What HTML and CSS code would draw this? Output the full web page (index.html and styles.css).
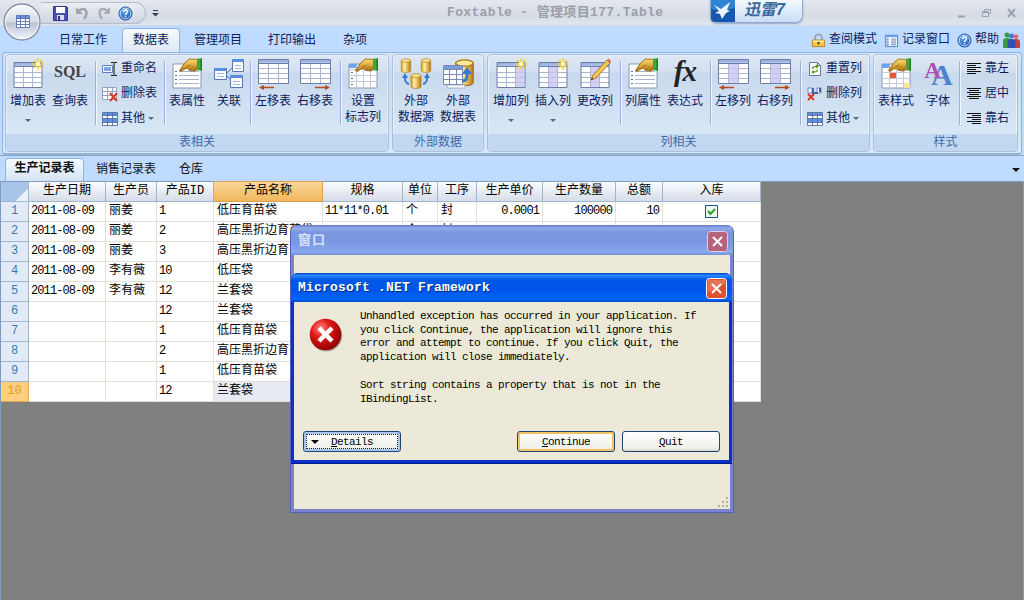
FILE: index.html
```html
<!DOCTYPE html>
<html lang="zh-CN">
<head>
    <meta charset="UTF-8">
    <title>Foxtable - 管理项目177.Table</title>
    <link rel="stylesheet" href="styles.css">
</head>
<body>
<!-- Icons -->
<svg class="defs" width="0" height="0">
    <defs>
        <linearGradient id="gold" x1="0" x2="1"><stop offset="0" stop-color="#e0a020"/><stop offset=".35" stop-color="#fff0a0"/><stop offset="1" stop-color="#b87808"/></linearGradient>
        <linearGradient id="skin" x1="0" x2="0" y1="0" y2="1"><stop offset="0" stop-color="#ffe068"/><stop offset="1" stop-color="#b47410"/></linearGradient>
        <linearGradient id="head" x1="0" x2="0" y1="0" y2="1"><stop offset="0" stop-color="#8fa8dc"/><stop offset="1" stop-color="#b8c8ee"/></linearGradient>
        <radialGradient id="red" cx=".35" cy=".3" r=".75"><stop offset="0" stop-color="#ff8a80"/><stop offset=".4" stop-color="#e01818"/><stop offset="1" stop-color="#8c0000"/></radialGradient>
        <radialGradient id="blue" cx=".4" cy=".3" r=".7"><stop offset="0" stop-color="#6fb0f5"/><stop offset="1" stop-color="#1450b8"/></radialGradient>
        <linearGradient id="orb" x1="0" x2="0" y1="0" y2="1"><stop offset="0" stop-color="#fafbfc"/><stop offset=".5" stop-color="#d5dbe4"/><stop offset=".52" stop-color="#b9c2d0"/><stop offset="1" stop-color="#f4f8fd"/></linearGradient>
    </defs>
    <symbol id="i-star" viewBox="0 0 12 12">
        <path d="M6 0v12M0 6h12M2 2l8 8M10 2l-8 8" stroke="#f0cf3c" stroke-width="1.5"/>
        <circle cx="6" cy="6" r="2.2" fill="#fffbc0"/>
    </symbol>
    <symbol id="i-table" viewBox="0 0 32 32">
        <path d="M2 4.500h28v25H2z" fill="#fff"/>
        <path d="M2 4.500h28v4H2z" fill="url(#head)"/>
        <path d="M2 14.500h28M2 19.500h28M2 24.500h28M11.500 9v20M20.500 9v20" stroke="#a9b6cf"/>
        <path d="M2 4.500h28v25H2zM2 8.500h28" fill="none" stroke="#6c7fa6"/>
    </symbol>
    <symbol id="i-addtable" viewBox="0 0 32 32">
        <use href="#i-table" x="0" y="0" width="32" height="32"/>
        <use href="#i-star" x="20" y="0" width="12" height="12"/>
    </symbol>
    <symbol id="i-moveleft" viewBox="0 0 32 32">
        <path d="M1 1.500h30v24H1z" fill="#fff"/>
        <path d="M1 1.500h30v4H1z" fill="url(#head)"/>
        <path d="M1 10.500h30M1 15.500h30M1 20.500h30M11.500 5v20M21.500 5v20" stroke="#a9b6cf"/>
        <path d="M1.500 1.500h30v24h-30zM1 5.500h30" fill="none" stroke="#6c7fa6"/>
        <path d="M4 29.500h13" stroke="#b84a1c" stroke-width="1.400"/>
        <path d="M2 29.500l5-2.500v5z" fill="#b84a1c"/>
    </symbol>
    <symbol id="i-moveright" viewBox="0 0 32 32">
        <path d="M1 1.500h30v24H1z" fill="#fff"/>
        <path d="M1 1.500h30v4H1z" fill="url(#head)"/>
        <path d="M1 10.500h30M1 15.500h30M1 20.500h30M11.500 5v20M21.500 5v20" stroke="#a9b6cf"/>
        <path d="M1.500 1.500h30v24h-30zM1 5.500h30" fill="none" stroke="#6c7fa6"/>
        <path d="M16 29.500h13" stroke="#b84a1c" stroke-width="1.400"/>
        <path d="M31 29.500l-5-2.500v5z" fill="#b84a1c"/>
    </symbol>
    <symbol id="i-hand" viewBox="0 0 24 14">
        <path d="M1 12.500L6 5l5-4 8 .5v10l-3 1.500-5-.5-2-2-3 .5-3 2.500z" fill="url(#skin)" stroke="#8a5c10" stroke-width=".8"/>
        <path d="M8 9l4-2M11 12l4-4M15 12.500l3-4" stroke="#8a5c10" stroke-width=".8"/>
        <path d="M19 .5h4.500v12H19z" fill="#3fa83c"/>
        <path d="M22 .5h1.500v12H22z" fill="#1f7a28"/>
    </symbol>
    <symbol id="i-props" viewBox="0 0 32 32">
        <path d="M2 6h28v24H2z" fill="#fff" stroke="#8b97b4"/>
        <path d="M8 13.500h20M8 17.500h20M8 21.500h20M8 25.500h20" stroke="#aab4cc"/>
        <path d="M4 13.500h2M4 17.500h2M4 21.500h2M4 25.500h2" stroke="#5570b0"/>
        <use href="#i-hand" x="7" y="0" width="25" height="14"/>
    </symbol>
    <symbol id="i-flag" viewBox="0 0 32 32">
        <path d="M2 6h28v24H2z" fill="#fff" stroke="#8b97b4"/>
        <path d="M2 6h8v4H2z" fill="#6ea3ee"/>
        <path d="M2 11.500h28M2 17.500h28M2 23.500h28M9.500 8v22M16.500 11v19M23.500 11v19" stroke="#c3cad9"/>
        <path d="M4 14.500h2M4 20.500h2M4 26.500h2" stroke="#5570b0"/>
        <use href="#i-hand" x="7" y="0" width="25" height="14"/>
    </symbol>
    <symbol id="i-style" viewBox="0 0 32 32">
        <path d="M2 6h28v24H2z" fill="#fff" stroke="#8b97b4"/>
        <path d="M2 6h8v4H2z" fill="#6ea3ee"/>
        <path d="M2 14.500h28M2 20.500h28M2 25.500h28M9.500 8v22M16.500 11v19M23.500 11v19" stroke="#c3cad9"/>
        <path d="M10 15h6v5h-6z" fill="#e8582c"/>
        <path d="M24 25h6v5h-6z" fill="#f8e4a0"/>
        <use href="#i-hand" x="7" y="0" width="25" height="14"/>
    </symbol>
    <symbol id="i-relation" viewBox="0 0 32 32">
        <path d="M13 16l8-8M13 17l6 6" stroke="#5c6f98"/>
        <g stroke="#5577b5" fill="#fff">
            <path d="M1.500 10.500h12v11h-12zM19.500 1.500h11v12h-11zM17.500 17.500h12v12h-12z"/>
        </g>
        <path d="M1 10h13v3H1zM19 1h12v3H19zM17 17h13v3H17z" fill="#5b8ede"/>
        <path d="M4 15.500h7M4 18.500h7M22 7.500h6M22 10.500h6M20 23.500h7M20 26.500h7" stroke="#a4b6dc"/>
    </symbol>
    <symbol id="i-db" viewBox="0 0 12 16">
        <path d="M1 2.500v11c0 2.500 10 2.500 10 0v-11z" fill="url(#gold)" stroke="#a87818" stroke-width=".7"/>
        <ellipse cx="6" cy="2.600" rx="5" ry="1.800" fill="#ffe898" stroke="#a87818" stroke-width=".7"/>
    </symbol>
    <symbol id="i-source" viewBox="0 0 32 32">
        <use href="#i-db" x="0" y="0" width="12" height="15"/>
        <use href="#i-db" x="20" y="0" width="12" height="15"/>
        <use href="#i-db" x="10" y="15" width="12" height="16"/>
        <path d="M9 26c-4-1-4-4-4-7M23 26c4-1 4-4 4-7" fill="none" stroke="#3a78cc" stroke-width="2"/>
        <path d="M5 15l-3 5h6zM27 15l-3 5h6z" fill="#3a78cc"/>
    </symbol>
    <symbol id="i-exttable" viewBox="0 0 32 32">
        <use href="#i-db" x="12" y="0" width="21" height="29"/>
        <path d="M5 27h18v3H5z" fill="#fff" stroke="#8b97b4" stroke-width=".7"/>
        <path d="M1.500 7.500h19v19h-19z" fill="#fff"/>
        <path d="M1.500 7.500h19v4h-19z" fill="#7b9be0"/>
        <path d="M1.500 7.500h19v19h-19zM1 11.500h19M1 16.500h19M1 21.500h19M7.500 11v15M14.500 11v15" fill="none" stroke="#7b8cb0"/>
        <path d="M20 23c6 0 5-5 5-8" fill="none" stroke="#3a78cc" stroke-width="3"/>
        <path d="M25 9l-5 7h10z" fill="#3a78cc"/>
    </symbol>
    <symbol id="i-addcol" viewBox="0 0 32 32">
        <use href="#i-table" x="0" y="0" width="32" height="32"/>
        <path d="M21 9h8.500v20H21z" fill="#c9c4f2" opacity=".8"/>
        <use href="#i-star" x="20" y="0" width="12" height="12"/>
    </symbol>
    <symbol id="i-inscol" viewBox="0 0 32 32">
        <use href="#i-table" x="0" y="0" width="32" height="32"/>
        <path d="M12 9h8v20h-8z" fill="#c9c4f2" opacity=".8"/>
        <use href="#i-star" x="20" y="0" width="12" height="12"/>
    </symbol>
    <symbol id="i-editcol" viewBox="0 0 32 32">
        <use href="#i-table" x="0" y="0" width="32" height="32"/>
        <path d="M12 9h8v20h-8z" fill="#c9c4f2" opacity=".8"/>
        <path d="M12 22l2-5L28 2l3 3-14 15z" fill="#f4c650" stroke="#8a6a28" stroke-width=".8"/>
        <path d="M28 2l1.500-1.500 3 3L31 5z" fill="#d87070"/>
        <path d="M12 22l1-2.500 1.500 1.500z" fill="#333"/>
    </symbol>
    <symbol id="i-colleft" viewBox="0 0 32 32">
        <use href="#i-moveleft" width="32" height="32"/>
        <path d="M12 6h9v19h-9z" fill="#c9c4f2" opacity=".8"/>
    </symbol>
    <symbol id="i-colright" viewBox="0 0 32 32">
        <use href="#i-moveright" width="32" height="32"/>
        <path d="M12 6h9v19h-9z" fill="#c9c4f2" opacity=".8"/>
    </symbol>
    <symbol id="i-rename" viewBox="0 0 16 16">
        <path d="M.5 4.500h10v7H.5z" fill="#fff" stroke="#5f7fb8"/>
        <path d="M2 6h7v4H2z" fill="#7da4e4"/>
        <path d="M9 1.500h2.500l.5.500.5-.5H15M9 14.500h2.500l.5-.5.5.5H15M12 2v12" fill="none" stroke="#111"/>
    </symbol>
    <symbol id="i-deltable" viewBox="0 0 16 16">
        <path d="M.5 1.500h14v12H.5z" fill="#fff"/>
        <path d="M.5 1.500h14v12H.5zM.5 5.500h14M.5 9.500h14M5.500 1.500v12M10.500 1.500v12" fill="none" stroke="#95a2be"/>
        <path d="M8 7l7 8M15 7l-7 8" stroke="#dc3a28" stroke-width="2"/>
    </symbol>
    <symbol id="i-other" viewBox="0 0 16 16">
        <path d="M.5 1.500h15v13H.5z" fill="#fff"/>
        <path d="M.5 1.500h15v3H.5zM.5 7.500h15v4H.5z" fill="#5f8fe0"/>
        <path d="M.5 1.500h15v13H.5zM.5 4.500h15M.5 7.500h15M.5 11.500h15M5.500 1.500v13M10.500 1.500v13" fill="none" stroke="#56719f" stroke-width=".9"/>
    </symbol>
    <symbol id="i-reset" viewBox="0 0 16 16">
        <path d="M2.500 1.500h8l3 3v10h-11z" fill="#fff" stroke="#68789c"/>
        <path d="M10.500 1.500v3h3" fill="none" stroke="#68789c"/>
        <path d="M5.500 8c0-2 2-3 4.500-2M10.500 8.500c0 2-2 3-4.500 2" fill="none" stroke="#5f9a20" stroke-width="1.300"/>
        <path d="M9 3.500l3 2-3 2zM7 9l-3 2 3 2z" fill="#5f9a20"/>
    </symbol>
    <symbol id="i-delcol" viewBox="0 0 16 16">
        <path d="M1 2h4v5H1zM10 2h4v5h-4z" fill="#fff" stroke="#6d88bc"/>
        <path d="M5 2h2v8H5zM12 2h2v4h-2zM7 6h4v2H7z" fill="#3f65ae"/>
        <path d="M1 8l6 6M7 8l-6 6" stroke="#dc3a28" stroke-width="2"/>
    </symbol>
    <symbol id="i-left" viewBox="0 0 16 16"><path d="M1 2.500h14M1 4.500h9M1 6.500h14M1 8.500h9M1 10.500h14M1 12.500h9" stroke="#111"/></symbol>
    <symbol id="i-center" viewBox="0 0 16 16"><path d="M1 2.500h14M3 4.500h10M1 6.500h14M3 8.500h10M1 10.500h14M3 12.500h10" stroke="#111"/></symbol>
    <symbol id="i-right" viewBox="0 0 16 16"><path d="M1 2.500h14M6 4.500h9M1 6.500h14M6 8.500h9M1 10.500h14M6 12.500h9" stroke="#111"/></symbol>
    <symbol id="i-help" viewBox="0 0 16 16">
        <circle cx="8" cy="8" r="7" fill="url(#blue)" stroke="#2a5cb0"/>
        <circle cx="8" cy="8" r="5.700" fill="none" stroke="#e8f2ff" stroke-width=".9"/>
        <path d="M6 6.500c0-3 4.200-2.700 4.200-.3 0 1.500-2.100 1.500-2.100 3.300" fill="none" stroke="#fff" stroke-width="1.500"/>
        <path d="M7.300 10.500h1.600v1.500H7.300z" fill="#fff"/>
    </symbol>
    <symbol id="i-lock" viewBox="0 0 16 16">
        <path d="M4.500 8V4.500c0-4 7-4 7 0V8" fill="none" stroke="#98a0ac" stroke-width="1.700"/>
        <path d="M1.500 7.500h13v7h-13z" fill="#f6c64c" stroke="#b88420"/>
        <path d="M2 8h12v2H2z" fill="#fde79c"/>
        <path d="M8 9.500v3M6.500 10.500h3" stroke="#6a4808" stroke-width="1.200"/>
    </symbol>
    <symbol id="i-record" viewBox="0 0 16 16">
        <path d="M1.500 2.500h13v12h-13z" fill="#fff" stroke="#4c78be"/>
        <path d="M1 2h14v2.500H1z" fill="#6c9ce6"/>
        <path d="M2 5h3.500v9H2z" fill="#b9d0f4"/>
        <path d="M7.500 6.500H13M7.500 8.500H13M7.500 10.500H13M7.500 12.500H13M3 6.500h1.500M3 9.500h1.500M3 12.500h1.500" stroke="#5b7cb8"/>
    </symbol>
</svg>

<header class="titlebar">
    <div class="quick">
        <svg width="15" height="15" viewBox="0 0 15 15"><path d="M.5.500h13l1 1v13H.5z" fill="#4a50b4" stroke="#303684"/><path d="M3 1h9v6H3z" fill="#fff"/><path d="M4 9h7v5H4z" fill="#d8dcf0"/><path d="M5 10h2v4H5z" fill="#30346c"/></svg>
        <svg width="13" height="14" viewBox="0 0 13 14"><path d="M2 5c8-5 11 1 6 8" fill="none" stroke="#a0a5b0" stroke-width="2.500"/><path d="M0 1v7h7z" fill="#a0a5b0"/></svg>
        <svg width="13" height="14" viewBox="0 0 13 14"><path d="M11 5C3 0 0 6 5 13" fill="none" stroke="#a8adb8" stroke-width="2.500"/><path d="M13 1v7H6z" fill="#a8adb8"/></svg>
        <svg width="15" height="15"><use href="#i-help"/></svg>
    </div>
    <svg class="more" width="7" height="8" viewBox="0 0 7 8"><path d="M1 1.500h5" stroke="#33415f"/><path d="M0 4h7L3.500 7.500z" fill="#33415f"/></svg>
    <div class="title">Foxtable - 管理项目177.Table</div>
    <div class="badge">
        <svg width="24" height="22" viewBox="0 0 24 22"><path d="M0 0h24v22H4q-4 0-4-4z" fill="#1758ae"/><path d="M0 0h24v8Q10 12 0 9z" fill="#2f82d4"/><path d="M3 5l7 4 9-7-3 8 3 1-4 2-4 6-2-5-5-1 4-2z" fill="#eef7ff"/></svg>
        <span>迅雷7</span>
    </div>
    <div class="sysbtns">
        <svg width="9" height="10" viewBox="0 0 9 10"><path d="M1 8.500h7" stroke="#9ba3b0" stroke-width="2"/></svg>
        <svg width="9" height="10" viewBox="0 0 9 10"><path d="M2.500 3V1.500h6v4H7M.5 4.500h6v4h-6zM.5 3.500h6" fill="none" stroke="#9ba3b0"/></svg>
        <svg width="9" height="10" viewBox="0 0 9 10"><path d="M1 1l7 8M8 1L1 9" stroke="#9ba3b0" stroke-width="2"/></svg>
    </div>
</header>

<svg class="orb" width="40" height="40" viewBox="0 0 40 40">
    <circle cx="20" cy="20" r="18" fill="url(#orb)" stroke="#8792a4" stroke-width="1.300"/>
    <circle cx="20" cy="20" r="16.500" fill="none" stroke="#fff" opacity=".7"/>
    <path d="M14.500 13.500h13v12h-13z" fill="#fff"/><path d="M14.500 13.500h13v3h-13z" fill="#6b8fdc"/>
    <path d="M14.500 13.500h13v12h-13zM14.500 16.500h13M14.500 19.500h13M14.500 22.500h13M18.500 13.500v12M23.500 13.500v12" fill="none" stroke="#5673b4" stroke-width=".9"/>
</svg>

<nav class="menu">
    <div class="tabs">
        <span>日常工作</span>
        <span class="active">数据表</span>
        <span>管理项目</span>
        <span>打印输出</span>
        <span class="short">杂项</span>
    </div>
    <div class="tools">
        <span><svg width="15" height="15"><use href="#i-lock"/></svg>查阅模式</span>
        <span><svg width="15" height="15"><use href="#i-record"/></svg>记录窗口</span>
        <span><svg width="15" height="15"><use href="#i-help"/></svg>帮助</span>
        <svg width="17" height="16" viewBox="0 0 17 16"><circle cx="4" cy="3" r="2.500" fill="#3b9a3b"/><path d="M0 16V9q0-3 4-3t4 3v7z" fill="#3b9a3b"/><circle cx="13" cy="4.500" r="2.300" fill="#e06a6a"/><path d="M9 16v-6q0-3 4-3t4 3v6z" fill="#c8403c"/><circle cx="8.500" cy="4" r="2.500" fill="#4a78d8"/><path d="M4.500 16v-6q0-3 4-3t4 3v6z" fill="#2c54b8"/></svg>
    </div>
</nav>

<section class="ribbon">
    <div class="group g-table">
        <div class="items">
            <div class="big"><svg><use href="#i-addtable"/></svg>增加表<i class="caret"></i></div>
            <div class="big"><b class="sql">SQL</b>查询表</div>
            <div class="sep wide"></div>
            <div class="col">
                <span><svg><use href="#i-rename"/></svg>重命名</span>
                <span><svg><use href="#i-deltable"/></svg>删除表</span>
                <span><svg><use href="#i-other"/></svg>其他<i class="caret"></i></span>
            </div>
            <div class="sep"></div>
            <div class="big"><svg><use href="#i-props"/></svg>表属性</div>
            <div class="big"><svg><use href="#i-relation"/></svg>关联</div>
            <div class="sep"></div>
            <div class="big"><svg><use href="#i-moveleft"/></svg>左移表</div>
            <div class="big"><svg><use href="#i-moveright"/></svg>右移表</div>
            <div class="sep wide"></div>
            <div class="big"><svg><use href="#i-flag"/></svg>设置<br>标志列</div>
        </div>
        <div class="caption">表相关</div>
    </div>
    <div class="group g-ext">
        <div class="items">
            <div class="big"><svg><use href="#i-source"/></svg>外部<br>数据源</div>
            <div class="big"><svg><use href="#i-exttable"/></svg>外部<br>数据表</div>
        </div>
        <div class="caption">外部数据</div>
    </div>
    <div class="group g-col">
        <div class="items">
            <div class="big"><svg><use href="#i-addcol"/></svg>增加列<i class="caret"></i></div>
            <div class="big"><svg><use href="#i-inscol"/></svg>插入列<i class="caret"></i></div>
            <div class="big"><svg><use href="#i-editcol"/></svg>更改列</div>
            <div class="sep wide"></div>
            <div class="big"><svg><use href="#i-props"/></svg>列属性</div>
            <div class="big"><b class="fx">fx</b>表达式</div>
            <div class="sep wide"></div>
            <div class="big"><svg><use href="#i-colleft"/></svg>左移列</div>
            <div class="big"><svg><use href="#i-colright"/></svg>右移列</div>
            <div class="sep wide"></div>
            <div class="col">
                <span><svg><use href="#i-reset"/></svg>重置列</span>
                <span><svg><use href="#i-delcol"/></svg>删除列</span>
                <span><svg><use href="#i-other"/></svg>其他<i class="caret"></i></span>
            </div>
        </div>
        <div class="caption">列相关</div>
    </div>
    <div class="group g-style">
        <div class="items">
            <div class="big"><svg><use href="#i-style"/></svg>表样式</div>
            <div class="big"><b class="font"><em>A</em>A</b>字体</div>
            <div class="sep"></div>
            <div class="col">
                <span><svg><use href="#i-left"/></svg>靠左</span>
                <span><svg><use href="#i-center"/></svg>居中</span>
                <span><svg><use href="#i-right"/></svg>靠右</span>
            </div>
        </div>
        <div class="caption">样式</div>
    </div>
</section>

<div class="sheets">
    <span class="active">生产记录表</span>
    <span>销售记录表</span>
    <span>仓库</span>
    <i class="caret"></i>
</div>

<main>
    <table>
        <colgroup>
            <col class="w28"><col class="w77"><col class="w51"><col class="w57"><col class="w109"><col class="w80"><col class="w35"><col class="w39"><col class="w66"><col class="w73"><col class="w47"><col class="w98">
        </colgroup>
        <thead>
            <tr><th class="corner"></th><th>生产日期</th><th>生产员</th><th>产品ID</th><th class="current">产品名称</th><th>规格</th><th>单位</th><th>工序</th><th>生产单价</th><th>生产数量</th><th>总额</th><th>入库</th></tr>
        </thead>
        <tbody>
            <tr><th>1</th><td class="code">2011-08-09</td><td>丽姜</td><td class="code">1</td><td>低压育苗袋</td><td class="code">11*11*0.01</td><td>个</td><td>封</td><td class="code num">0.0001</td><td class="code num">100000</td><td class="code num">10</td><td class="check"><svg width="13" height="13" viewBox="0 0 13 13"><path d="M.5.500h12v12H.5z" fill="#f1f7f1" stroke="#1c5180"/><path d="M3 6l2.500 3L10 4" fill="none" stroke="#2fa02f" stroke-width="2"/></svg></td></tr>
            <tr><th>2</th><td class="code">2011-08-09</td><td>丽姜</td><td class="code">2</td><td>高压黑折边育苗袋</td><td></td><td>个</td><td>封</td><td></td><td></td><td></td><td></td></tr>
            <tr><th>3</th><td class="code">2011-08-09</td><td>丽姜</td><td class="code">3</td><td>高压黑折边育</td><td></td><td></td><td></td><td></td><td></td><td></td><td></td></tr>
            <tr><th>4</th><td class="code">2011-08-09</td><td>李有薇</td><td class="code">10</td><td>低压袋</td><td></td><td></td><td></td><td></td><td></td><td></td><td></td></tr>
            <tr><th>5</th><td class="code">2011-08-09</td><td>李有薇</td><td class="code">12</td><td>兰套袋</td><td></td><td></td><td></td><td></td><td></td><td></td><td></td></tr>
            <tr><th>6</th><td></td><td></td><td class="code">12</td><td>兰套袋</td><td></td><td></td><td></td><td></td><td></td><td></td><td></td></tr>
            <tr><th>7</th><td></td><td></td><td class="code">1</td><td>低压育苗袋</td><td></td><td></td><td></td><td></td><td></td><td></td><td></td></tr>
            <tr><th>8</th><td></td><td></td><td class="code">2</td><td>高压黑折边育</td><td></td><td></td><td></td><td></td><td></td><td></td><td></td></tr>
            <tr><th>9</th><td></td><td></td><td class="code">1</td><td>低压育苗袋</td><td></td><td></td><td></td><td></td><td></td><td></td><td></td></tr>
            <tr><th class="current">10</th><td></td><td></td><td class="code">12</td><td class="selected">兰套袋</td><td></td><td></td><td></td><td></td><td></td><td></td><td></td></tr>
        </tbody>
    </table>
</main>

<div class="window inactive">
    <div class="caption-bar">窗口<svg class="close" width="21" height="21" viewBox="0 0 21 21"><rect x=".5" y=".5" width="20" height="20" rx="3" fill="#b5637a" stroke="#dccbea"/><path d="M6 6l9 9M15 6l-9 9" stroke="#fff" stroke-width="2"/></svg></div>
    <div class="client">
        <svg class="grip" width="12" height="12" viewBox="0 0 12 12"><path d="M8 0h2v2H8zM4 4h2v2H4zM8 4h2v2H8zM0 8h2v2H0zM4 8h2v2H4zM8 8h2v2H8z" fill="#b8b4a2"/></svg>
    </div>
</div>

<div class="window error">
    <div class="caption-bar">Microsoft .NET Framework<svg class="close" width="21" height="21" viewBox="0 0 21 21"><rect x=".5" y=".5" width="20" height="20" rx="3" fill="#dd5030" stroke="#fff"/><path d="M2 2h17v4L2 14z" fill="#f08868" opacity=".6"/><path d="M6 6l9 9M15 6l-9 9" stroke="#fff" stroke-width="2"/></svg></div>
    <div class="client">
        <div class="message">
            <svg width="34" height="34" viewBox="0 0 34 34"><circle cx="17.500" cy="17.800" r="15.800" fill="#8a8674" opacity=".6"/><circle cx="16.500" cy="16.500" r="15.800" fill="url(#red)"/><path d="M10 10l13 13M23 10L10 23" stroke="#fff" stroke-width="4.500"/></svg>
            <div>
                <p>Unhandled exception has occurred in your application. If<br>you click Continue, the application will ignore this<br>error and attempt to continue. If you click Quit, the<br>application will close immediately.</p>
                <p>Sort string contains a property that is not in the<br>IBindingList.</p>
            </div>
        </div>
        <div class="buttons">
            <button class="details"><i class="caret"></i><u>D</u>etails</button>
            <button class="default"><u>C</u>ontinue</button>
            <button><u>Q</u>uit</button>
        </div>
    </div>
</div>
</body>
</html>
```
FILE: styles.css
```css
* { box-sizing: border-box; }
body {
    margin: 0;
    width: 1024px;
    height: 600px;
    overflow: hidden;
    display: flex;
    flex-direction: column;
    background: #bfdbff;
    font: 12px/16px "Liberation Mono", "Noto Sans CJK SC", monospace;
    color: #0c1c5c;
}
svg { display: block; flex: none; }
.defs { position: absolute; }
.caret {
    width: 0;
    height: 0;
    border: 3px solid transparent;
    border-top-color: #56678a;
    border-bottom: 0;
}

/* Title bar */
.titlebar {
    height: 26px;
    flex: none;
    display: flex;
    align-items: flex-start;
    background: linear-gradient(#e4e8ee, #d6dce5 60%, #e0e6ed);
    border-bottom: 1px solid #cfdcec;
}
.quick {
    width: 105px;
    height: 22px;
    margin: 2px 0 0 41px;
    padding: 0 0 0 12px;
    display: flex;
    align-items: center;
    gap: 8px;
    border: 1px solid #b4bdcb;
    border-left: 0;
    border-radius: 0 11px 11px 0;
    background: linear-gradient(#e9edf3, #cfd6e1);
}
.more { margin: 9px 0 0 6px; }
.title {
    width: 220px;
    margin: 5px 0 0 288px;
    font-size: 13px;
    font-weight: bold;
    letter-spacing: .35px;
    color: #9b9fa8;
    white-space: nowrap;
}
.badge {
    width: 93px;
    height: 23px;
    margin-left: 43px;
    display: flex;
    border: 1px solid #92abd0;
    border-top: 0;
    border-radius: 0 0 7px 7px;
    background: linear-gradient(#f4f9ff, #c8ddf6);
    box-shadow: 0 1px 2px #8fa5c5;
    color: #3b669c;
    font: italic bold 16px/20px "Liberation Sans", "Noto Sans CJK SC", sans-serif;
}
.badge span { margin-left: 9px; }
.sysbtns { display: flex; gap: 16px; margin: 8px 0 0 154px; }
.orb { position: absolute; left: 2px; top: 2px; }

/* Menu tabs */
.menu {
    height: 26px;
    flex: none;
    display: flex;
    justify-content: space-between;
    padding: 2px 4px 0 46px;
    line-height: 26px;
}
.tabs { display: flex; }
.tabs span { width: 74px; text-align: center; }
.tabs span.short { width: 52px; }
.tabs .active {
    width: 58px;
    margin: 0 1px 0 2px;
    border: 1px solid #8db2e3;
    border-bottom: 0;
    border-radius: 4px 4px 0 0;
    background: linear-gradient(#f6faff, #dde8f6);
    line-height: 24px;
}
.tools { display: flex; gap: 7px; align-items: center; }
.tools span { display: flex; align-items: center; gap: 3px; line-height: 22px; }
.tools > svg { margin-left: -3px; }

/* Ribbon */
.ribbon {
    height: 103px;
    flex: none;
    display: flex;
    margin: 0 2px;
    padding: 1px 0 0 2px;
    border: 1px solid #8db2e3;
    border-radius: 4px;
    background: linear-gradient(#dce7f5, #c8dbf0 20%, #d8e8f8);
    border-bottom: 2px solid #95b5cf;
}
.group {
    height: 98px;
    flex: none;
    border: 1px solid #a9c1de;
    border-radius: 4px;
    background: linear-gradient(#dfe8f4, #d3dfef 18%, #c9d9ed 19%, #dcebf9);
    box-shadow: inset 0 0 0 1px #e8f1fb;
    overflow: hidden;
}
.g-table { width: 384px; }
.g-ext { width: 92px; margin-left: 3px; }
.g-col { width: 383px; margin-left: 3px; }
.g-style { width: 145px; margin-left: 3px; }
.items { height: 79px; display: flex; padding: 3px 0 0 1px; }
.g-ext .items, .g-col .items { padding-left: 2px; }
.big {
    width: 42px;
    flex: none;
    display: flex;
    flex-direction: column;
    align-items: center;
    text-align: center;
    white-space: nowrap;
}
.big svg { width: 32px; height: 32px; margin-bottom: 4px; }
.big .caret { margin-top: 9px; }
.big b { width: 40px; height: 32px; margin-bottom: 4px; font-family: "Liberation Serif", serif; }
.sql { font-size: 16px; line-height: 28px; color: #444; }
.fx { font-size: 29px; line-height: 26px; font-style: italic; color: #222; letter-spacing: -1px; }
.font { font-size: 30px; line-height: 34px; color: #4d82cf; letter-spacing: -1px; }
.font em { font-size: 23px; font-style: normal; color: #b14cb0; margin-right: -9px; position: relative; top: -7px; }
.sep {
    width: 1px;
    height: 64px;
    flex: none;
    margin: 3px 1px 0 0;
    background: #97b3d8;
    box-shadow: 1px 0 #eef5fd;
}
.sep.wide { margin-left: 4px; }
.col { width: 67px; flex: none; padding-left: 5px; }
.col span {
    height: 25px;
    display: flex;
    align-items: center;
    gap: 3px;
    white-space: nowrap;
    position: relative;
    top: -2px;
}
.col svg { width: 16px; height: 16px; }
.caption {
    height: 17px;
    line-height: 18px;
    text-align: center;
    color: #3e6aaa;
    background: #c1d8f0;
}

/* Sheet tabs */
.sheets {
    height: 26px;
    flex: none;
    display: flex;
    align-items: center;
    padding: 2px 4px 0 5px;
    border-top: 1px solid #86a5c0;
    color: #111;
}
.sheets span { padding: 0 12px 0 11px; }
.sheets .active {
    width: 79px;
    height: 23px;
    padding: 0;
    margin: 0 1px 0 0;
    line-height: 21px;
    text-align: center;
    font-weight: bold;
    border: 1px solid #8db2e3;
    border-bottom: 0;
    border-radius: 4px 4px 0 0;
    background: linear-gradient(#f6faff, #d5e4f5);
}
.sheets .caret { margin-left: auto; border-width: 4px; border-bottom: 0; border-top-color: #111; }

/* Data grid */
main {
    flex: 1;
    background: #808080;
    border: 1px solid #7c9cc2;
    border-width: 1px 1px 0 1px;
}
table { width: 760px; table-layout: fixed; border-collapse: separate; border-spacing: 0; background: #fff; color: #000; margin-top: -1px; }
.w28 { width: 28px; }
.w77 { width: 77px; }
.w51 { width: 51px; }
.w57 { width: 57px; }
.w109 { width: 109px; }
.w80 { width: 80px; }
.w35 { width: 35px; }
.w39 { width: 39px; }
.w66 { width: 66px; }
.w73 { width: 73px; }
.w47 { width: 47px; }
.w98 { width: 98px; }
th, td {
    height: 20px;
    padding: 0 3px;
    line-height: 19px;
    font-weight: normal;
    text-align: left;
    vertical-align: top;
    white-space: nowrap;
    overflow: hidden;
    border-right: 1px solid #e0e2d8;
    border-bottom: 1px solid #e0e2d8;
}
.code { padding-left: 2px; letter-spacing: -.9px; }
thead th {
    height: 21px;
    text-align: center;
    line-height: 19px;
    border-color: #9eb6ce;
    border-top: 1px solid #7c9cc2;
    background: linear-gradient(#fafcfe, #d5dde9);
}
tbody th { text-align: center; background: #e1eaf6; color: #3e79ae; border-color: #9eb6ce; padding: 0; }
thead .current { background: linear-gradient(#f9d79b, #f1b75c); border-color: #d9a050; }
tbody .current { background: #ffcf80; color: #d8a020; border-color: #e0a850; }
.corner { background: linear-gradient(135deg, transparent 72%, #e9f1fb 73%) #a9c4e9; }
.selected { background: #e8eaf3; }
td.num { text-align: right; }
.check svg { margin: 3px auto 0; }

/* Dialog windows */
.window {
    position: absolute;
    display: flex;
    flex-direction: column;
    color: #000;
}
.caption-bar {
    flex: none;
    display: flex;
    justify-content: space-between;
    align-items: center;
    font-weight: bold;
}
.client { flex: 1; background: #ece9d8; }
.inactive {
    left: 290px;
    top: 225px;
    width: 444px;
    height: 288px;
    padding: 0 3px 3px;
    border: 1px solid #5560b8;
    border-width: 0 1px 1px;
    border-radius: 7px 7px 0 0;
    background: #7b83d0;
}
.inactive .caption-bar {
    height: 30px;
    margin: 0 -3px;
    padding: 2px 5px 0 7px;
    border-radius: 7px 7px 0 0;
    background: linear-gradient(#6478c0, #92aae8 10%, #7a96df 25%, #7b98e2 60%, #86a9ee 90%, #7890d4);
    color: #d5e1f8;
    font-size: 13px;
    letter-spacing: 1px;
}
.inactive .client { display: flex; align-items: flex-end; justify-content: flex-end; }
.error {
    left: 291px;
    top: 273px;
    width: 441px;
    height: 191px;
    padding: 0 3px 3px;
    border-radius: 7px 7px 0 0;
    background: #0831c8;
    border-bottom: 1px solid #001a80;
}
.error .caption-bar {
    height: 29px;
    margin: 0 -3px;
    padding: 1px 5px 0 7px;
    border-radius: 7px 7px 0 0;
    background: linear-gradient(#0046c8, #2b86ff 9%, #0058e6 22%, #0055e8 60%, #0066ff 90%, #0046cc);
    color: #fff;
    font-size: 13px;
    letter-spacing: .2px;
    text-shadow: 1px 1px #00267a;
}
.error .client { padding: 8px 9px 0; display: flex; flex-direction: column; justify-content: space-between; }
.message { display: flex; padding-left: 6px; gap: 17px; font-size: 11px; line-height: 13.7px; letter-spacing: -.6px; }
.message svg { margin-top: 8px; }
.message p { margin: 0 0 14px; white-space: nowrap; }
.buttons { display: flex; gap: 7px; margin-bottom: 8px; }
.buttons button {
    width: 98px;
    height: 21px;
    padding: 0;
    border: 1px solid #1c4474;
    border-radius: 3px;
    background: linear-gradient(#fff, #f0f0ea 85%, #d8d4c8);
    color: #000;
    font: 11px/18px "Liberation Mono", monospace;
    letter-spacing: -.6px;
}
.buttons .default { box-shadow: inset 0 0 0 2px #f3c466; }
.buttons .details {
    display: flex;
    align-items: center;
    margin-right: auto;
    padding-left: 7px;
    outline: 1px dotted #222;
    outline-offset: -4px;
    box-shadow: inset 0 0 0 2px #a9c4ee;
}
.details .caret { border-width: 4px; border-bottom: 0; border-top-color: #000; margin-right: 12px; }
```
